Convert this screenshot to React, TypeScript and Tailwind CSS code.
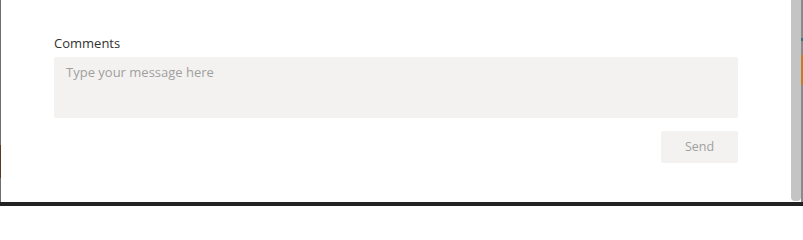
import React from 'react'

export default function App() {
    return (
        <div className="flex h-[206px] w-[803px] flex-col overflow-hidden bg-[#2b2b2b]">
            <div className="flex min-h-0 flex-1">
                {/* left window edge */}
                <div className="flex w-[1px] flex-col bg-[#6e6e6e]">
                    <div className="mt-[145px] h-[33px] bg-[#5a3a22]" />
                </div>
                {/* panel */}
                <div className="flex flex-1 flex-col bg-white pl-[53px] pr-[53px] pt-[35px] font-['Open_Sans',sans-serif]">
                    <label className="mb-[5px] block text-[13px] leading-[17px] text-[#323130]">Comments</label>
                    <textarea
                        placeholder="Type your message here"
                        className="h-[61px] w-full resize-none rounded-[2px] bg-[#f3f2f1] px-[12px] py-[6px] text-[13px] leading-[18px] text-[#323130] outline-none placeholder:text-[#a19f9d]"
                    />
                    <div className="mt-[13px] flex justify-end">
                        <button className="h-[32px] w-[77px] rounded-[2px] bg-[#f3f2f1] text-[12.5px] text-[#a19f9d]">
                            Send
                        </button>
                    </div>
                </div>
                {/* scrollbar */}
                <div className="flex w-[10px] flex-col bg-white">
                    <div className="mb-[1px] flex-1 rounded-b-[4px] bg-[#c4c4c4]" />
                </div>
                <div className="flex w-[2px] flex-col bg-[#8a8a8a]">
                    <div className="mt-[38px] h-[3px] bg-[#3c6f7a]" />
                    <div className="mt-[14px] h-[30px] bg-[#c27a2c]" />
                </div>
            </div>
            <div className="h-[4px] bg-[#222222]" />
        </div>
    )
}
